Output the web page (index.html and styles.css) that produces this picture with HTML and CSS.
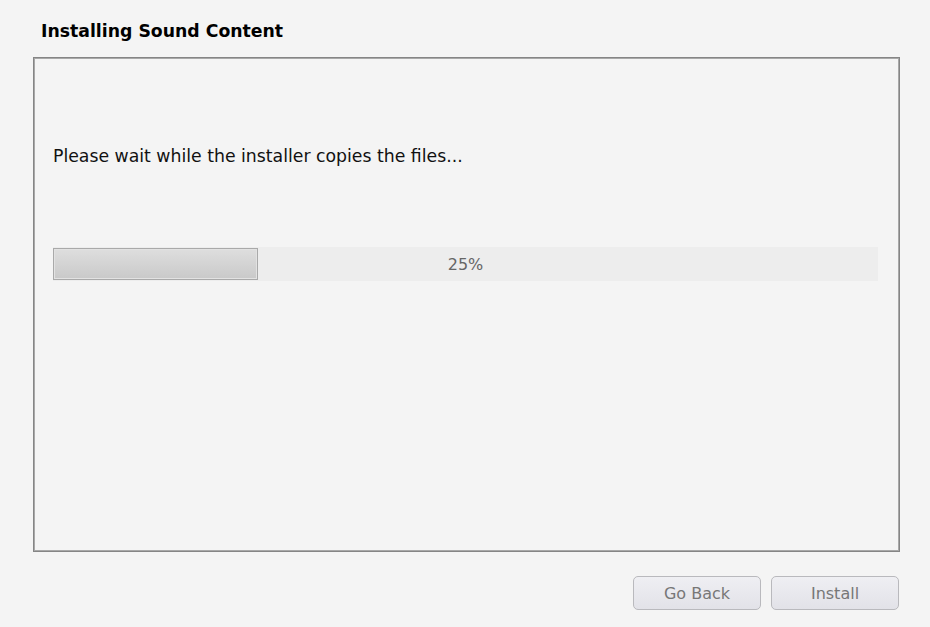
FILE: index.html
```html
<!DOCTYPE html>
<html>
<head>
<meta charset="utf-8">
<link rel="stylesheet" href="styles.css">
</head>
<body>
<div class="page">
  <h1 class="title">Installing Sound Content</h1>
  <div class="panel">
    <p class="message">Please wait while the installer copies the files...</p>
    <div class="progress">
      <div class="progress-fill" style="width: 24.8%"></div>
      <div class="progress-label">25%</div>
    </div>
  </div>
  <div class="actions">
    <button class="btn">Go Back</button>
    <button class="btn">Install</button>
  </div>
</div>
</body>
</html>
```
FILE: styles.css
```css
html, body {
  margin: 0;
  padding: 0;
  background: #f4f4f4;
  font-family: "DejaVu Sans", Verdana, sans-serif;
}
.page {
  width: 930px;
  height: 627px;
  box-sizing: border-box;
  padding: 20px 30px 0 33px;
  display: flex;
  flex-direction: column;
}
.title {
  margin: 0 0 0 8px;
  font-size: 17.3px;
  font-weight: bold;
  color: #000;
  line-height: 22px;
  height: 37px;
}
.panel {
  width: 867px;
  height: 495px;
  box-sizing: border-box;
  border: 1px solid #858585;
  box-shadow: inset 0 0 0 1px #a8a8a8;
  background: #f4f4f4;
  padding: 88px 21px 0 19px;
}
.message {
  margin: 0;
  font-size: 17.3px;
  line-height: 20px;
  color: #111;
}
.progress {
  margin-top: 81px;
  position: relative;
  height: 34px;
  background: #ededed;
}
.progress-fill {
  position: absolute;
  left: 0;
  top: 1px;
  bottom: 1px;
  box-sizing: border-box;
  border: 1px solid #a9a9a9;
  box-shadow: inset 0 0 0 1px #e2e2e2;
  background: linear-gradient(#dedede, #c9c9c9);
}
.progress-label {
  position: absolute;
  inset: 0;
  display: flex;
  align-items: center;
  justify-content: center;
  font-size: 16px;
  color: #666;
}
.actions {
  display: flex;
  justify-content: flex-end;
  gap: 10px;
  margin-top: 24px;
  width: 866px;
}
.btn {
  width: 128px;
  height: 34px;
  border: 1px solid #b9b9bd;
  border-radius: 5px;
  background: linear-gradient(#efeff3, #e2e2e8);
  color: #777;
  font-family: "DejaVu Sans", Verdana, sans-serif;
  font-size: 16px;
  padding: 0;
}
```
